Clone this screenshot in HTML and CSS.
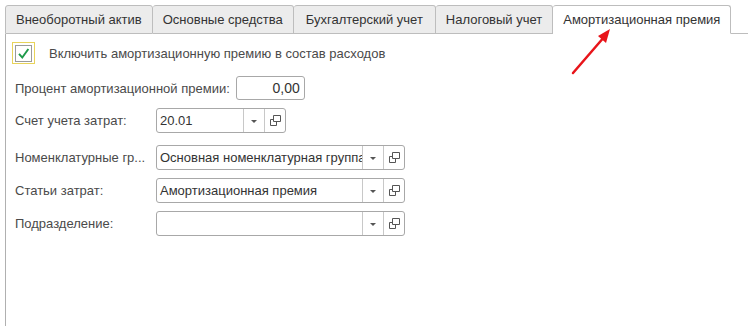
FILE: index.html
```html
<!DOCTYPE html>
<html>
<head>
  <meta charset="utf-8">
  <title>Амортизационная премия</title>
  <link rel="stylesheet" href="styles.css">
</head>
<body class="fa-page">

<div class="fa-tabs">
  <div class="fa-tab">Внеоборотный актив</div>
  <div class="fa-tab">Основные средства</div>
  <div class="fa-tab fa-tab-wide">Бухгалтерский учет</div>
  <div class="fa-tab">Налоговый учет</div>
  <div class="fa-tab fa-tab-active">Амортизационная премия</div>
  <div class="fa-tabs-rest"></div>
</div>

<section class="fa-panel">
  <label class="fa-check">
    <span class="fa-box">
      <svg width="16" height="16" viewBox="0 0 16 16"><path d="M2.5 8.5 L6.5 13 L14 2.5" fill="none" stroke="#1e9a4a" stroke-width="2.4"/></svg>
    </span>
    <span>Включить амортизационную премию в состав расходов</span>
  </label>

  <div class="fa-line">
    <span class="fa-label">Процент амортизационной премии:</span>
    <span class="fa-field fa-num">0,00</span>
  </div>

  <div class="fa-grid">
    <span class="fa-label fa-first">Счет учета затрат:</span>
    <span class="fa-field fa-short fa-first">
      <span class="fa-value">20.01</span>
      <span class="fa-btn fa-drop"><i></i></span>
      <span class="fa-btn fa-open"><svg width="11" height="11" viewBox="0 0 11 11"><path d="M3.5 0.5h7v6h-7z M3.5 4.5h-3v6h6v-3.5" fill="none" stroke="#555" stroke-width="1"/></svg></span>
    </span>

    <span class="fa-label">Номенклатурные гр...</span>
    <span class="fa-field">
      <span class="fa-value">Основная номенклатурная группа</span>
      <span class="fa-btn fa-drop"><i></i></span>
      <span class="fa-btn fa-open"><svg width="11" height="11" viewBox="0 0 11 11"><path d="M3.5 0.5h7v6h-7z M3.5 4.5h-3v6h6v-3.5" fill="none" stroke="#555" stroke-width="1"/></svg></span>
    </span>

    <span class="fa-label">Статьи затрат:</span>
    <span class="fa-field">
      <span class="fa-value">Амортизационная премия</span>
      <span class="fa-btn fa-drop"><i></i></span>
      <span class="fa-btn fa-open"><svg width="11" height="11" viewBox="0 0 11 11"><path d="M3.5 0.5h7v6h-7z M3.5 4.5h-3v6h6v-3.5" fill="none" stroke="#555" stroke-width="1"/></svg></span>
    </span>

    <span class="fa-label">Подразделение:</span>
    <span class="fa-field">
      <span class="fa-value"></span>
      <span class="fa-btn fa-drop"><i></i></span>
      <span class="fa-btn fa-open"><svg width="11" height="11" viewBox="0 0 11 11"><path d="M3.5 0.5h7v6h-7z M3.5 4.5h-3v6h6v-3.5" fill="none" stroke="#555" stroke-width="1"/></svg></span>
    </span>
  </div>
</section>

<svg class="fa-arrow" width="60" height="60" viewBox="0 0 60 60">
  <path d="M12 49 L44 12" stroke="#e8141a" stroke-width="2.5" stroke-linecap="round"/>
  <path d="M49 5 L37 12 L45 19 Z" fill="#e8141a"/>
</svg>

</body>
</html>
```

FILE: styles.css
```css
*,
*::before,
*::after {
  box-sizing: border-box;
}

.fa-page {
  margin: 0;
  height: 326px;
  overflow: hidden;
  background: #fff;
  font-family: "Liberation Sans", Arial, sans-serif;
  font-size: 13px;
  color: #4a4a4a;
  position: relative;
}

.fa-tabs {
  display: flex;
  padding: 5px 0 0 5px;
  height: 34px;
}

.fa-tab {
  height: 29px;
  line-height: 27px;
  padding: 0 10px 0 10px;
  background: #ececec;
  border: 1px solid #bdbdbd;
  border-left: none;
  border-radius: 3px 3px 0 0;
  color: #333;
  white-space: nowrap;
}
.fa-tab:first-child {
  border-left: 1px solid #bdbdbd;
}
.fa-tab-wide {
  padding: 0 12px;
}

.fa-tab-active {
  background: #fff;
  border-bottom-color: #fff;
  padding: 0 10px 0 10px;
  border-right: 1px solid #bdbdbd;
}

.fa-tabs-rest {
  flex: 1;
  border-bottom: 1px solid #bdbdbd;
}

.fa-panel {
  margin-left: 5px;
  border-left: 1px solid #b0b0b0;
  height: 300px;
  padding: 8px 0 0 6px;
}

.fa-check {
  display: flex;
  align-items: center;
  gap: 14px;
  height: 22px;
  color: #4a4a4a;
}

.fa-box {
  width: 23px;
  height: 22px;
  border: 1px solid #e8d35a;
  display: flex;
  align-items: center;
  justify-content: center;
  background: #fff;
}
.fa-box svg {
  border: 1px solid #9a9a9a;
  width: 17px;
  height: 17px;
  padding: 1px;
}

.fa-line {
  display: flex;
  align-items: center;
  gap: 6px;
  margin-top: 12px;
  padding-left: 3px;
}

.fa-grid {
  display: grid;
  grid-template-columns: 141px auto;
  row-gap: 8px;
  align-items: center;
  margin-top: 8px;
  padding-left: 3px;
  justify-items: start;
}

.fa-first {
  margin-bottom: 4px;
}

.fa-field {
  display: flex;
  height: 25px;
  border: 1px solid #a8a8a8;
  border-radius: 3px;
  width: 249px;
  color: #333;
  background: #fff;
  overflow: hidden;
}

.fa-num {
  width: 69px;
  height: 24px;
  justify-content: flex-end;
  align-items: center;
  padding-right: 4px;
  font-size: 14px;
}

.fa-short {
  width: 130px;
}

.fa-value {
  flex: 1;
  min-width: 0;
  padding: 0 2px 0 3px;
  line-height: 23px;
  white-space: nowrap;
  overflow: hidden;
  font-size: 13px;
}

.fa-btn {
  width: 21px;
  border-left: 1px solid #c8c8c8;
  display: flex;
  align-items: center;
  justify-content: center;
}

.fa-drop i {
  width: 0;
  height: 0;
  border-left: 3px solid transparent;
  border-right: 3px solid transparent;
  border-top: 3px solid #555;
  margin-top: 2px;
}

.fa-arrow {
  position: absolute;
  left: 561px;
  top: 24px;
}
```
